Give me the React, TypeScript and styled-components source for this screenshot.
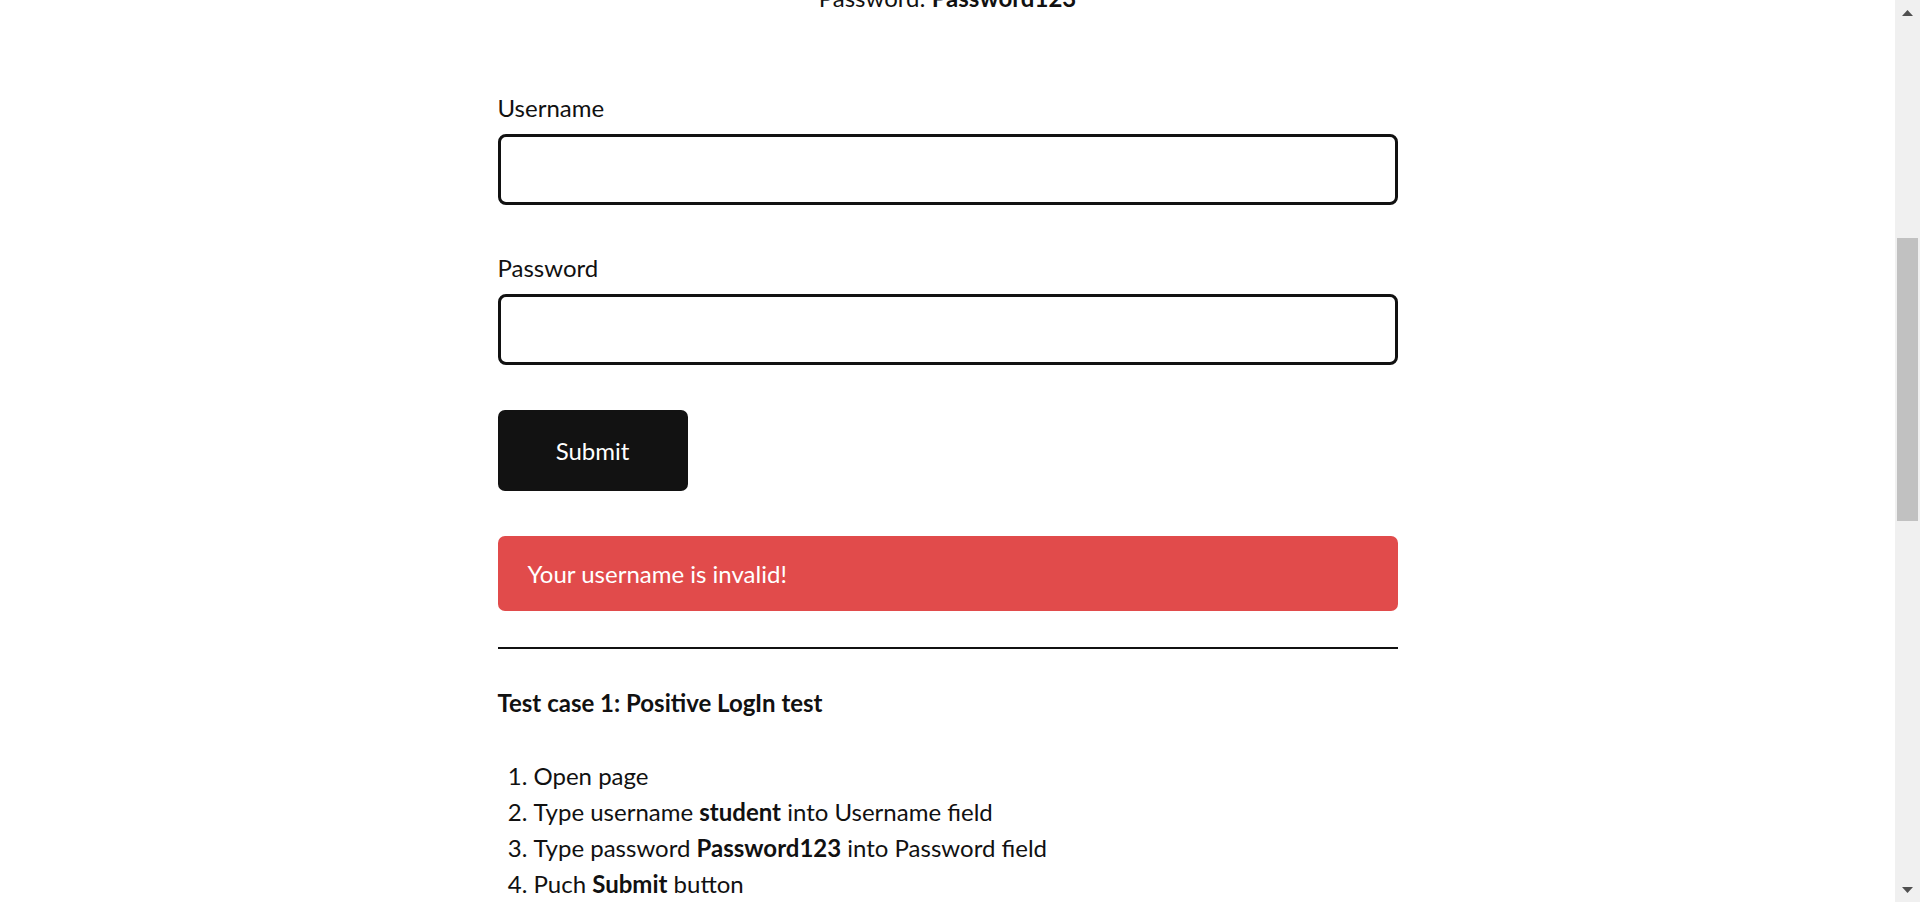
import React from 'react';
import styled, { createGlobalStyle } from 'styled-components';

const GlobalStyle = createGlobalStyle`
  html, body {
    margin: 0;
    background: #fff;
  }
  body {
    font-family: Lato, 'Open Sans', sans-serif;
    font-size: 24px;
    line-height: 36px;
    color: #111;
  }
`;

const Page = styled.div`
  display: flex;
  height: 100vh;
  overflow: hidden;
`;

const Content = styled.div`
  flex: 1;
  min-width: 0;
  overflow: hidden;
`;

// the page is shown scrolled, so the credentials line sits half above the frame
const Container = styled.main`
  width: 900px;
  margin: -20px auto 0;
`;

const Credentials = styled.p`
  margin: 0;
  text-align: center;
`;

const Form = styled.form`
  display: flex;
  flex-direction: column;
  align-items: flex-start;
  margin-top: 74px;
`;

const Field = styled.div`
  width: 100%;
  display: flex;
  flex-direction: column;
  margin-bottom: 45px;
`;

const Label = styled.label`
  margin-bottom: 8px;
`;

const Input = styled.input`
  box-sizing: border-box;
  width: 100%;
  height: 71px;
  border: 3px solid #111;
  border-radius: 8px;
  padding: 0 16px;
  font: inherit;
  background: #fff;
  outline: none;
`;

const SubmitButton = styled.button`
  width: 190px;
  height: 81px;
  border: none;
  border-radius: 7px;
  background: #121212;
  color: #fff;
  font-family: inherit;
  font-size: 24px;
  cursor: pointer;
`;

const ErrorBox = styled.div`
  box-sizing: border-box;
  width: 100%;
  height: 75px;
  margin-top: 45px;
  padding: 0 30px;
  display: flex;
  align-items: center;
  border-radius: 7px;
  background: #e14b4b;
  color: #fff;
`;

const Rule = styled.hr`
  border: none;
  border-top: 2px solid #111;
  margin: 36px 0 36px;
`;

const CaseTitle = styled.p`
  font-weight: 700;
  margin: 0 0 37px;
`;

const Steps = styled.ol`
  margin: 0;
  padding-left: 36px;
`;

const Scrollbar = styled.div`
  flex: none;
  width: 25px;
  display: flex;
  flex-direction: column;
  background: #f0f0f0;
`;

const ArrowButton = styled.div`
  flex: none;
  height: 25px;
  display: flex;
  align-items: center;
  justify-content: center;
`;

const Track = styled.div`
  flex: 1;
  padding: 0 2px;
`;

const Thumb = styled.div<{ $top: number; $size: number }>`
  margin-top: ${(p) => p.$top}px;
  height: ${(p) => p.$size}px;
  background: #c1c1c1;
`;

const Arrow: React.FC<{ down?: boolean }> = ({ down }) => (
  <svg width="11" height="6" viewBox="0 0 11 6">
    <polygon points={down ? '0,0 11,0 5.5,6' : '0,6 5.5,0 11,6'} fill="#505050" />
  </svg>
);

const steps: React.ReactNode[] = [
  'Open page',
  <>Type username <b>student</b> into Username field</>,
  <>Type password <b>Password123</b> into Password field</>,
  <>Puch <b>Submit</b> button</>,
];

const App: React.FC = () => {
  return (
    <>
      <GlobalStyle />
      <Page>
        <Content>
          <Container>
            <Credentials>
              Password: <b>Password123</b>
            </Credentials>

            <Form onSubmit={(e) => e.preventDefault()}>
              <Field>
                <Label htmlFor="username">Username</Label>
                <Input type="text" id="username" name="username" />
              </Field>
              <Field>
                <Label htmlFor="password">Password</Label>
                <Input type="password" id="password" name="password" />
              </Field>
              <SubmitButton type="submit">Submit</SubmitButton>
              <ErrorBox>Your username is invalid!</ErrorBox>
            </Form>

            <Rule />

            <section>
              <CaseTitle>Test case 1: Positive LogIn test</CaseTitle>
              <Steps>
                {steps.map((s, i) => (
                  <li key={i}>{s}</li>
                ))}
              </Steps>
            </section>
          </Container>
        </Content>

        <Scrollbar>
          <ArrowButton>
            <Arrow />
          </ArrowButton>
          <Track>
            <Thumb $top={213} $size={283} />
          </Track>
          <ArrowButton>
            <Arrow down />
          </ArrowButton>
        </Scrollbar>
      </Page>
    </>
  );
};

export default App;
